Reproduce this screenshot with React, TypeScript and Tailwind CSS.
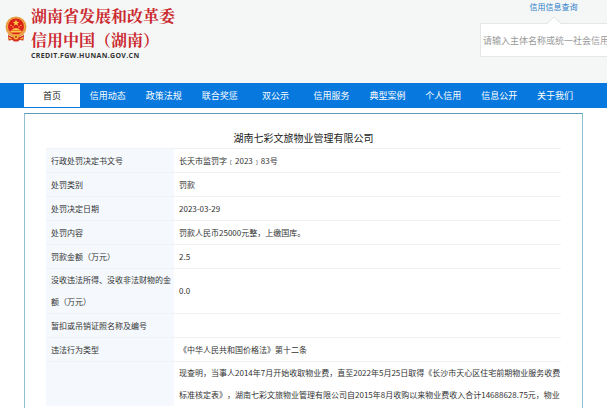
import { ReactNode } from "react";

const NAV_ITEMS = ["首页", "信用动态", "政策法规", "联合奖惩", "双公示", "信用服务", "典型案例", "个人信用", "信息公开", "关于我们"];

const ROWS: { label: string; value: string }[] = [
  { label: "行政处罚决定书文号", value: "长天市监罚字﹝2023﹞83号" },
  { label: "处罚类别", value: "罚款" },
  { label: "处罚决定日期", value: "2023-03-29" },
  { label: "处罚内容", value: "罚款人民币25000元整，上缴国库。" },
  { label: "罚款金额（万元）", value: "2.5" },
  { label: "没收违法所得、没收非法财物的金额（万元）", value: "0.0" },
  { label: "暂扣或吊销证照名称及编号", value: "" },
  { label: "违法行为类型", value: "《中华人民共和国价格法》第十二条" },
  {
    label: "",
    value:
      "现查明，当事人2014年7月开始收取物业费，直至2022年5月25日取得《长沙市天心区住宅前期物业服务收费标准核定表》，湖南七彩文旅物业管理有限公司自2015年8月收购以来物业费收入合计14688628.75元，物业",
  },
];

const Emblem = () => {
  return (
    <svg viewBox="0 0 44 52" className="h-[26px] w-[22px] shrink-0" aria-hidden="true">
      <circle cx="22" cy="22" r="21" fill="#eba848" />
      <circle cx="22" cy="22" r="19" fill="none" stroke="#e08a3a" strokeWidth="1.5" strokeDasharray="3 2" />
      <circle cx="22" cy="21" r="16" fill="#dc2118" />
      <path d="M22 7l1.8 4.6 4.9.2-3.9 3 1.4 4.7-4.2-2.7-4.2 2.7 1.4-4.7-3.9-3 4.9-.2z" fill="#ffc94a" />
      <g fill="#ffc94a">
        <circle cx="12" cy="19" r="1.3" />
        <circle cx="16" cy="22" r="1.3" />
        <circle cx="28" cy="22" r="1.3" />
        <circle cx="32" cy="19" r="1.3" />
        <path d="M15 26l7-2 7 2v2H15zM11 29h22v4H11z" />
      </g>
      <path d="M6 37q6 6 16 6t16-6l-1 12-8-1-3 3H18l-3-3-8 1z" fill="#d6301f" />
      <circle cx="22" cy="42" r="5" fill="#f0b43c" />
      <circle cx="22" cy="42" r="2" fill="#cf2a1c" />
      <path d="M8 42l6 3-1 2-6-1zM36 42l-6 3 1 2 6-1z" fill="#efae3a" />
    </svg>
  );
};

const Header = () => {
  return (
    <header className="flex h-[83px] shrink-0 items-start justify-between bg-[#f5f7f7]">
      <div className="flex gap-1 pt-1 pl-[5px]">
        <div className="pt-3">
          <Emblem />
        </div>
        <div>
          <h1 className="font-['Noto_Serif_CJK_SC','Noto_Sans_CJK_SC',serif] text-[16px] leading-[24px] font-bold whitespace-nowrap text-[#cb2a2f]">
            湖南省发展和改革委
            <br />
            信用中国（湖南）
          </h1>
          <p className="font-['Open_Sans',sans-serif] text-[7px] leading-[8px] font-bold tracking-wider text-[#333]">
            CREDIT.FGW.HUNAN.GOV.CN
          </p>
        </div>
      </div>

      <form className="w-[127px]" onSubmit={(e) => e.preventDefault()}>
        <div className="flex h-[23px] flex-col items-center pl-5">
          <a href="#search" className="text-[8px] leading-[14px] text-[#2f7fc8]">
            信用信息查询
          </a>
          <svg viewBox="0 0 14 8" className="mt-auto -mb-px h-2 w-[14px]" aria-hidden="true">
            <path d="M0 8l7-7 7 7z" fill="#fff" />
            <path d="M0 7.5l7-6.5 7 6.5" fill="none" stroke="#e0e3e4" />
          </svg>
        </div>
        <input
          type="text"
          aria-label="信用信息查询"
          placeholder="请输入主体名称或统一社会信用代码"
          className="block h-[34px] w-full border border-r-0 border-[#e4e6e7] bg-white pl-[2px] text-[9px] outline-none placeholder:text-[#999]"
        />
      </form>
    </header>
  );
};

const NavBar = () => {
  return (
    <nav className="h-[25px] shrink-0 bg-[#0678de] px-6">
      <ul className="flex h-full">
        {NAV_ITEMS.map((item, i) => (
          <li key={item} className="flex-1 py-px">
            <a
              href="#nav"
              className={
                i === 0
                  ? "flex h-full items-center justify-center bg-white text-[9px] text-[#222]"
                  : "flex h-full items-center justify-center text-[9px] text-white"
              }
            >
              {item}
            </a>
          </li>
        ))}
      </ul>
    </nav>
  );
};

const Panel = ({ title, children }: { title: string; children: ReactNode }) => {
  return (
    <section className="flex-1 overflow-hidden border border-b-0 border-[#8fc0d4] border-t-[#5f9cb8] px-[21px] pt-4">
      <h2 className="pb-[2px] text-center text-[10px] leading-[16px] text-[#222]">{title}</h2>
      {children}
    </section>
  );
};

export default function App() {
  return (
    <div className="flex h-screen flex-col overflow-hidden bg-white font-['Noto_Sans_CJK_SC',sans-serif] [text-spacing-trim:space-all]">
      <Header />
      <NavBar />
      <main className="flex min-h-0 flex-1 flex-col px-6 pt-[5px]">
        <Panel title="湖南七彩文旅物业管理有限公司">
          <table className="w-full table-fixed border-collapse text-[8px] leading-[22px] text-[#333]">
            <tbody>
              {ROWS.map((row) => (
                <tr key={row.label} className="border-t border-[#f0f2f5]">
                  <th scope="row" className="h-6 w-[128px] bg-[#f5f9fe] pl-[5px] text-left font-normal">
                    {row.label}
                  </th>
                  <td className="pl-[5px]">{row.value}</td>
                </tr>
              ))}
            </tbody>
          </table>
        </Panel>
      </main>
    </div>
  );
}
